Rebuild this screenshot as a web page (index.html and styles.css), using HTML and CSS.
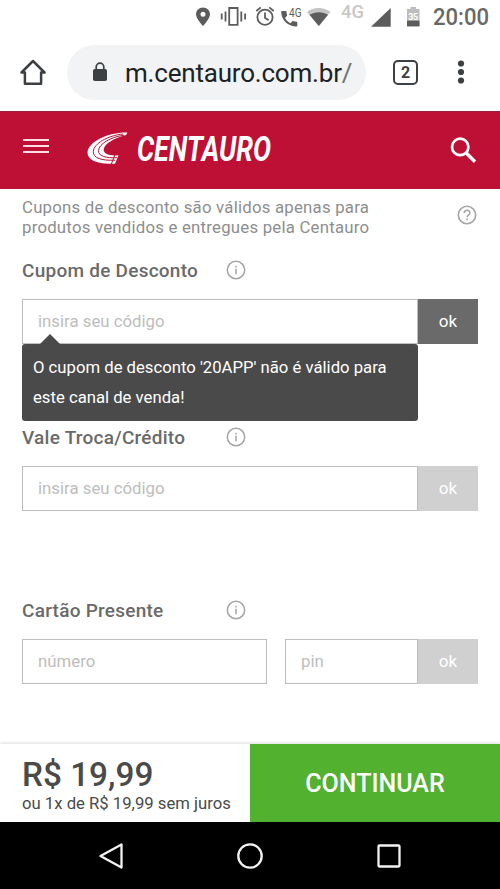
FILE: index.html
```html
<!DOCTYPE html>
<html lang="pt-BR">
<head>
<meta charset="utf-8">
<title>Centauro</title>
<link rel="stylesheet" href="styles.css">
</head>
<body>
<div class="status">
  <svg class="status-icons" width="300" height="35" viewBox="190 0 300 35" fill="#5c5c5c">
    <path fill-rule="evenodd" d="M203 7.500c-4 0-7 3-7 6.800 0 4.700 7 11.700 7 11.700s7-7 7-11.700c0-3.800-3-6.800-7-6.800zm0 4.300a2.500 2.500 0 1 1 0 5 2.500 2.500 0 0 1 0-5z"/>
    <path fill="none" stroke="#5c5c5c" stroke-width="1.800" d="M229.200 8h8.400v16.800h-8.400zM225.500 11.500v10M221.700 13.500v6M241.300 11.500v10M245.100 13.500v6"/>
    <g fill="none" stroke="#5c5c5c" stroke-width="1.800"><circle cx="265" cy="17.300" r="7.600"/><path d="M256.300 11l4.500-3.600M273.700 11l-4.500-3.600M265 12.500v5.200l3.600 2.600"/></g>
    <path d="M282 11h3.700c.5 0 .8.300.8.800 0 1.200.2 2.400.6 3.300.1.400 0 .7-.2.900l-1.900 2c1.300 2.400 3.200 4.100 5.500 5.300l1.800-2c.3-.3.600-.3.900-.2 1 .4 2 .6 3.200.6.500 0 .9.300.9.800v3.300c0 .5-.4.700-.9.700-8.500 0-15.200-6.500-15.200-14.700 0-.5.300-.8.800-.8z"/>
    <text x="289" y="17" class="tiny" textLength="12.500" lengthAdjust="spacingAndGlyphs">4G</text>
    <path fill="#c4c4c4" d="M307 12c6.500-5.300 16.500-5.300 23.500 0L318.800 26z"/><path d="M309.500 14.800c5.500-3.500 13.300-3.500 18.500 0L318.800 26z"/>
    <text x="341" y="18" class="network" textLength="23" lengthAdjust="spacingAndGlyphs">4G</text>
    <path d="M390.700 8v18.700H371z"/>
    <path fill="#bdbdbd" d="M410.500 7h5.500v2h3.500v17.500h-12.500V9h3.500z"/><path d="M407 20.700h12.500v5.600H407z"/>
    <text x="408.200" y="19.800" class="charge" textLength="10">35</text>
    <text x="433" y="25.200" class="clock" textLength="56" lengthAdjust="spacingAndGlyphs">20:00</text>
  </svg>
</div>
<div class="browser">
  <svg class="home" width="26" height="27" viewBox="0 0 26 27" fill="none" stroke="#3c4043" stroke-width="2.500" stroke-linejoin="round"><path d="M1.500 13.500L13 2l11.500 11.500h-3.400v11.300H4.900V13.500z"/></svg>
  <div class="url">
    <svg width="16" height="20" viewBox="0 0 16 20"><rect x="1" y="7" width="14" height="12" rx="1.800" fill="#3c4043"/><path d="M4.200 8V5a3.800 3.800 0 0 1 7.600 0v3" fill="none" stroke="#3c4043" stroke-width="1.700"/></svg>
    <span class="address">m.centauro.com.br<i>/</i></span>
  </div>
  <div class="tabs">2</div>
  <svg class="more" width="8" height="26" viewBox="0 0 8 26" fill="#3c4043"><circle cx="4" cy="4.500" r="3.100"/><circle cx="4" cy="13" r="3.100"/><circle cx="4" cy="21.500" r="3.100"/></svg>
</div>
<header class="header">
  <div class="menu"><span></span><span></span><span></span></div>
  <svg class="logo" width="200" height="60" viewBox="84 116 200 60">
    <path fill="#fff" d="M127.500 131.500C112 130.500 88 139.500 87.500 151.500c-.3 7.500 10 11.300 22 11.200h5.500l3.500-8.500c-9 1-15.300-1.500-14.800-6 .7-5.500 10.800-11.200 22.300-14.200z"/>
    <path fill="none" stroke="#be1034" stroke-width="1" d="M123 133c-15 1.500-29.300 9.500-29.700 17.500-.3 6.500 8.200 9.300 21.700 8.700M124 134.200c-14 2-24.900 8.800-25.500 15.300-.5 5.500 7.500 7.800 18.500 7.200M115 153.500l-4 10.500"/>
    <text class="wordmark" transform="translate(137 159.500)" textLength="134" lengthAdjust="spacingAndGlyphs">CENTAURO</text>
  </svg>
  <svg class="search" width="27" height="27" viewBox="0 0 27 27" fill="none" stroke="#fff"><circle cx="10.200" cy="9.900" r="8.200" stroke-width="2.700"/><path d="M16 15.800l9 9" stroke-width="3.400"/></svg>
</header>
<main class="content">
  <div class="notice">
    <p>Cupons de desconto são válidos apenas para<br>produtos vendidos e entregues pela Centauro</p>
    <svg width="20" height="20" viewBox="0 0 20 20" fill="none" stroke="#a5a5a5" stroke-width="1.600"><circle cx="10" cy="10" r="8.700"/><path d="M7.200 8.100c0-3.700 5.700-3.700 5.700-.2 0 2-2.800 2.200-2.800 4.300M10.100 13.500v1.800"/></svg>
  </div>
  <section class="coupon">
    <h2><span>Cupom de Desconto</span><svg width="20" height="20" viewBox="0 0 20 20" fill="none" stroke="#a5a5a5" stroke-width="1.500"><circle cx="10" cy="10" r="8.700"/><path d="M10 8.800v5.500M10 5.700v1.700"/></svg></h2>
    <div class="row"><div class="field code">insira seu código</div><div class="ok active">ok</div>
      <div class="tooltip"><div>O cupom de desconto '20APP' não é válido para</div><div>este canal de venda!</div></div>
    </div>
  </section>
  <section class="voucher">
    <h2><span>Vale Troca/Crédito</span><svg width="20" height="20" viewBox="0 0 20 20" fill="none" stroke="#a5a5a5" stroke-width="1.500"><circle cx="10" cy="10" r="8.700"/><path d="M10 8.800v5.500M10 5.700v1.700"/></svg></h2>
    <div class="row"><div class="field code">insira seu código</div><div class="ok">ok</div></div>
  </section>
  <section class="gift">
    <h2><span>Cartão Presente</span><svg width="20" height="20" viewBox="0 0 20 20" fill="none" stroke="#a5a5a5" stroke-width="1.500"><circle cx="10" cy="10" r="8.700"/><path d="M10 8.800v5.500M10 5.700v1.700"/></svg></h2>
    <div class="row"><div class="field number">número</div><div class="field pin">pin</div><div class="ok">ok</div></div>
  </section>
</main>
<footer class="checkout">
  <div class="total"><strong>R$ 19,99</strong><span>ou 1x de R$ 19,99 sem juros</span></div>
  <div class="continue">CONTINUAR</div>
</footer>
<nav class="system">
  <svg width="26" height="28" viewBox="0 0 26 28"><path d="M23.500 2.500v23L2.500 14z"/></svg>
  <svg width="28" height="28" viewBox="0 0 28 28"><circle cx="14" cy="14" r="11.700"/></svg>
  <svg width="26" height="28" viewBox="0 0 26 28"><rect x="2.500" y="3.500" width="21" height="21" rx="1"/></svg>
</nav>
</body>
</html>
```
FILE: styles.css
```css
* { box-sizing: border-box; }
body { margin: 0; width: 500px; height: 889px; overflow: hidden; background: #fff; font-family: Roboto, sans-serif; display: flex; flex-direction: column; }
svg { display: block; flex: none; }
.status { height: 35px; padding-left: 190px; }
.tiny { font-size: 13px; }
.network { font-size: 18px; font-weight: 500; fill: #c8c8c8; }
.charge { font-size: 9px; font-weight: 700; fill: #fff; }
.clock { font-size: 23px; font-weight: 500; fill: #686868; }
.browser { height: 76px; display: flex; align-items: center; padding: 0 0 2px 20px; }
.url { width: 299px; height: 55px; margin-left: 21px; border-radius: 28px; background: #f1f3f4; display: flex; align-items: center; padding-left: 25px; }
.address { margin-left: 17px; padding-top: 2px; font-size: 26px; line-height: 32px; color: #202124; letter-spacing: -0.2px; white-space: nowrap; }
.address i { font-style: normal; color: #6f7276; }
.tabs { width: 25px; height: 25px; margin-left: 27px; border: 2.500px solid #3c4043; border-radius: 5px; font-size: 16px; font-weight: 700; color: #3c4043; display: flex; align-items: center; justify-content: center; }
.more { margin-left: 39px; }
.header { height: 78px; background: #be1034; border-top: 1px solid #97213f; display: flex; align-items: center; padding-left: 23px; }
.menu { width: 26px; display: flex; flex-direction: column; gap: 4px; margin-top: -10px; }
.menu span { height: 2px; background: #fbdfe5; }
.logo { margin-left: 35px; margin-top: -8px; }
.wordmark { font-size: 35px; font-weight: 700; font-style: italic; fill: #fff; }
.search { margin-left: 166px; }
.content { height: 555px; padding: 9px 22px 0; }
.notice { display: flex; justify-content: space-between; height: 61px; padding-right: 1px; }
.notice p { margin: 0; font-size: 16.800px; line-height: 19.500px; letter-spacing: 0.22px; color: #8e8e8e; white-space: nowrap; }
.notice svg { margin-top: 7px; }
h2 { margin: 0; height: 22px; display: flex; align-items: center; font-size: 19px; font-weight: 500; letter-spacing: 0.25px; color: #6a6a6a; }
h2 span { width: 204px; white-space: nowrap; }
.row { position: relative; display: flex; height: 45px; margin-top: 18px; }
.field { border: 1px solid #bdbdbd; padding-left: 15px; line-height: 43px; font-size: 16.800px; color: #bdbdbd; }
.code { width: 396px; }
.number { width: 245px; }
.pin { width: 133px; margin-left: 18px; }
.ok { width: 60px; background: #d0d0d0; color: #fff; font-size: 17px; line-height: 44px; text-align: center; }
.ok.active { background: #6a6a6a; }
.coupon { height: 167px; }
.voucher { height: 173px; }
.tooltip { position: absolute; top: 45px; left: 0; width: 396px; height: 77px; border-radius: 3px; background: #4a4a4a; color: #fff; padding: 9px 11px; font-size: 16.700px; line-height: 30px; white-space: nowrap; }
.tooltip::before { content: ""; position: absolute; left: 18px; top: -10px; border: solid transparent; border-width: 0 10px 10px; border-bottom-color: #4a4a4a; }
.checkout { height: 78px; display: flex; box-shadow: 0 -1px 3px #ddd; }
.total { width: 250px; padding: 12px 0 0 22px; color: #4a4a4a; white-space: nowrap; }
.total strong { display: block; font-size: 33.300px; line-height: 38px; font-weight: 500; }
.total span { display: block; font-size: 16.700px; line-height: 20px; }
.continue { width: 250px; background: #52b12f; color: #fff; font-size: 25px; font-weight: 500; line-height: 79px; text-align: center; }
.system { height: 67px; background: #000; display: flex; align-items: center; padding-left: 98px; }
.system svg { fill: none; stroke: #f2f2f2; stroke-width: 2.300; stroke-linejoin: round; }
.system svg + svg { margin-left: 112px; }
```
